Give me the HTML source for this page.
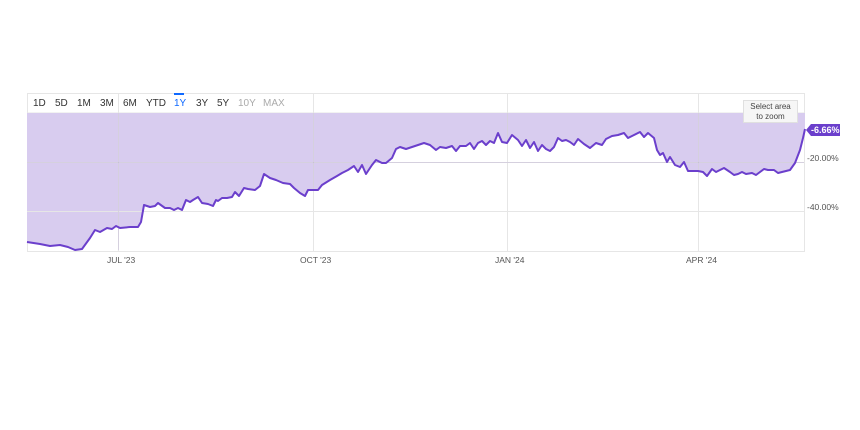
<!DOCTYPE html>
<html><head><style>
body{margin:0;width:860px;height:430px;background:#fff;font-family:"Liberation Sans",sans-serif;overflow:hidden;position:relative}
.tb{position:absolute;top:98px;font-size:10px;color:#333}
.ax{position:absolute;font-size:8.5px;color:#555}
</style></head><body>
<svg width="860" height="430" style="position:absolute;left:0;top:0">
<rect x="27.5" y="93.5" width="777" height="158" fill="none" stroke="#e6e6e6"/>
<line x1="27" y1="113" x2="804" y2="113" stroke="#e6e6e6"/>
<polygon fill="#d8ccef" points="27,113 805,113 805,129 803,138 800,150 795,163 790,170 782,172 778,173 774,170 768,170 764,169 760,172 756,175 752,173 746,174 742,172 738,174 734,175 730,172 724,168 720,170 716,172 712,169 707,176 703,172 698,171 694,171 688,171 684,162 680,167 675,165 670,157 667,162 663,153 660,155 657,150 654,138 648,133 644,137 640,132 634,135 628,138 624,133 618,135 612,136 606,139 602,145 596,143 590,148 584,144 578,139 574,145 570,142 566,140 562,141 558,138 554,147 550,151 546,149 542,145 538,151 534,142 530,148 526,140 522,146 518,140 512,135 507,143 502,142 498,133 494,143 490,141 486,145 482,141 478,143 474,149 470,143 466,146 460,146 456,151 452,146 446,148 440,147 436,150 430,145 424,143 418,145 412,147 406,149 400,147 396,149 392,158 386,163 382,163 376,160 372,165 366,174 362,165 358,172 354,166 348,170 342,173 337,176 330,180 322,185 318,190 313,190 308,190 305,196 300,193 294,188 290,184 283,183 276,180 270,178 264,174 260,186 255,190 248,189 244,188 239,196 235,192 232,197 227,198 222,198 218,201 216,200 213,206 208,204 202,203 198,197 193,200 190,202 186,200 182,210 178,208 174,210 170,208 165,208 158,203 155,206 150,207 144,205 141,222 138,227 130,227 120,228 116,226 112,229 107,228 100,232 95,230 90,238 82,249 75,250 68,247 60,245 50,246 40,244 27,242"/>
<g stroke="#e6e6e6" stroke-width="1">
<line x1="27" y1="162.5" x2="804" y2="162.5"/><line x1="27" y1="211.5" x2="804" y2="211.5"/>
<line x1="118.5" y1="93" x2="118.5" y2="251"/><line x1="313.5" y1="93" x2="313.5" y2="251"/>
<line x1="507.5" y1="93" x2="507.5" y2="251"/><line x1="698.5" y1="93" x2="698.5" y2="251"/>
</g>
<g stroke="rgba(120,90,180,0.15)"><line x1="27" y1="162.5" x2="804" y2="162.5"/><line x1="118.5" y1="113" x2="118.5" y2="250"/><line x1="313.5" y1="113" x2="313.5" y2="190"/><line x1="507.5" y1="113" x2="507.5" y2="143"/><line x1="698.5" y1="113" x2="698.5" y2="171"/></g>
<polyline fill="none" stroke="#6b3fcc" stroke-width="2" stroke-linejoin="round" points="805,129 803,138 800,150 795,163 790,170 782,172 778,173 774,170 768,170 764,169 760,172 756,175 752,173 746,174 742,172 738,174 734,175 730,172 724,168 720,170 716,172 712,169 707,176 703,172 698,171 694,171 688,171 684,162 680,167 675,165 670,157 667,162 663,153 660,155 657,150 654,138 648,133 644,137 640,132 634,135 628,138 624,133 618,135 612,136 606,139 602,145 596,143 590,148 584,144 578,139 574,145 570,142 566,140 562,141 558,138 554,147 550,151 546,149 542,145 538,151 534,142 530,148 526,140 522,146 518,140 512,135 507,143 502,142 498,133 494,143 490,141 486,145 482,141 478,143 474,149 470,143 466,146 460,146 456,151 452,146 446,148 440,147 436,150 430,145 424,143 418,145 412,147 406,149 400,147 396,149 392,158 386,163 382,163 376,160 372,165 366,174 362,165 358,172 354,166 348,170 342,173 337,176 330,180 322,185 318,190 313,190 308,190 305,196 300,193 294,188 290,184 283,183 276,180 270,178 264,174 260,186 255,190 248,189 244,188 239,196 235,192 232,197 227,198 222,198 218,201 216,200 213,206 208,204 202,203 198,197 193,200 190,202 186,200 182,210 178,208 174,210 170,208 165,208 158,203 155,206 150,207 144,205 141,222 138,227 130,227 120,228 116,226 112,229 107,228 100,232 95,230 90,238 82,249 75,250 68,247 60,245 50,246 40,244 27,242"/>
<rect x="174" y="93" width="10" height="2" fill="#0f69ff"/>
<rect x="743.5" y="100.5" width="54" height="22" fill="#f6f6f6" stroke="#e0e0e0"/>
<polygon points="806,130 811,124 840,124 840,136 811,136" fill="#6b3fcc"/>
</svg>
<div class="tb" style="left:33px">1D</div>
<div class="tb" style="left:55px">5D</div>
<div class="tb" style="left:77px">1M</div>
<div class="tb" style="left:100px">3M</div>
<div class="tb" style="left:123px">6M</div>
<div class="tb" style="left:146px">YTD</div>
<div class="tb" style="left:174px;color:#0f69ff">1Y</div>
<div class="tb" style="left:196px">3Y</div>
<div class="tb" style="left:217px">5Y</div>
<div class="tb" style="left:238px;color:#aaa">10Y</div>
<div class="tb" style="left:263px;color:#aaa">MAX</div>
<div style="position:absolute;left:743px;top:102px;width:55px;text-align:center;font-size:8px;line-height:10px;color:#444">Select area<br>to zoom</div>
<div style="position:absolute;left:811px;top:125px;font-size:9px;font-weight:bold;color:#fff">-6.66%</div>
<div class="ax" style="left:807px;top:153px">-20.00%</div>
<div class="ax" style="left:807px;top:202px">-40.00%</div>
<div class="ax" style="left:107px;top:255px">JUL '23</div>
<div class="ax" style="left:300px;top:255px">OCT '23</div>
<div class="ax" style="left:495px;top:255px">JAN '24</div>
<div class="ax" style="left:686px;top:255px">APR '24</div>
</body></html>
